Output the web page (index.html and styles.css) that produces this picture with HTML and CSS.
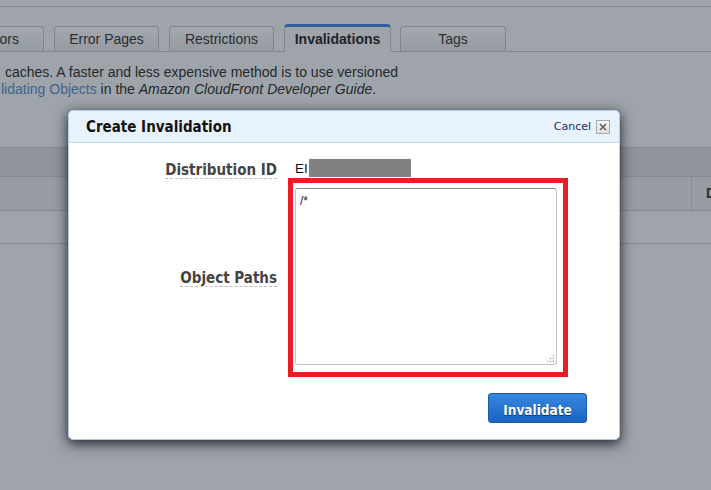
FILE: index.html
```html
<!DOCTYPE html>
<html>
<head>
<meta charset="utf-8">
<link rel="stylesheet" href="styles.css">
</head>
<body>
<div class="page">
  <div class="topbar"></div>
  <div class="tabs">
    <div class="tab tab-first">Behaviors</div>
    <div class="tab">Error Pages</div>
    <div class="tab">Restrictions</div>
    <div class="tab tab-active">Invalidations</div>
    <div class="tab tab-last">Tags</div>
  </div>
  <div class="intro">
    <div class="intro-line1">caches. A faster and less expensive method is to use versioned</div>
    <div class="intro-line2"><span class="link">lidating Objects</span> in the <em>Amazon CloudFront Developer Guide</em>.</div>
  </div>
  <div class="table">
    <div class="trow thead"></div>
    <div class="trow tbody1"><div class="tcell-spacer"></div><div class="tcell-last">D</div></div>
    <div class="trow tbody2"></div>
  </div>
</div>

<div class="modal">
  <div class="modal-header">
    <div class="modal-title">Create Invalidation</div>
    <div class="modal-cancel">Cancel <span class="close-box"><svg width="8" height="8" viewBox="0 0 8 8"><path d="M1 1 L7 7 M7 1 L1 7" stroke="#555" stroke-width="1.4" fill="none"/></svg></span></div>
  </div>
  <div class="modal-body">
    <div class="form-row row-id">
      <div class="label"><span class="label-text">Distribution ID</span></div>
      <div class="value">EI<span class="redact"></span></div>
    </div>
    <div class="form-row row-paths">
      <div class="label"><span class="label-text">Object Paths</span></div>
      <div class="value">
        <div class="highlight">
          <textarea class="paths">/*</textarea>
          <span class="grip"></span>
        </div>
      </div>
    </div>
    <div class="modal-footer">
      <button class="btn-primary">Invalidate</button>
    </div>
  </div>
</div>
</body>
</html>
```

FILE: styles.css
```css
html, body {
  margin: 0;
  padding: 0;
}
body {
  width: 711px;
  height: 490px;
  overflow: hidden;
  background: #9ea4aa;
  font-family: "Liberation Sans", Arial, sans-serif;
  color: #24282c;
  position: relative;
}
.page {
  width: 711px;
}
.topbar {
  height: 6px;
  border-bottom: 1px solid #878d93;
}
.tabs {
  display: flex;
  align-items: flex-end;
  gap: 10px;
  height: 27px;
  padding-top: 17px;
  border-bottom: 1px solid #80868c;
}
.tab {
  flex: 0 0 auto;
  box-sizing: border-box;
  width: 105px;
  height: 25px;
  border: 1px solid #80868c;
  border-bottom: none;
  border-radius: 4px 4px 0 0;
  background: linear-gradient(#a2a8ae, #959ba1);
  font-size: 14px;
  line-height: 24px;
  text-align: center;
  color: #2a2e33;
  white-space: nowrap;
  overflow: hidden;
}
.tab-first {
  margin-left: -61px;
  text-align: right;
  padding-right: 24px;
}
.tab-active {
  width: 107px;
  height: 28px;
  margin-bottom: -1px;
  border-top: 3px solid #2f5f96;
  background: #9ea4aa;
  font-weight: bold;
  line-height: 24px;
  color: #1f2327;
}
.tab-last {
  margin-left: -1px;
  width: 106px;
}
.intro {
  margin-top: 12px;
  font-size: 14px;
  line-height: 17px;
  white-space: nowrap;
}
.intro-line1 {
  padding-left: 5px;
}
.intro-line2 {
  padding-left: 1px;
}
.link {
  color: #3b6390;
}
.table {
  margin-top: 49px;
  border-top: 1px solid #878d93;
}
.trow {
  border-bottom: 1px solid #858b91;
}
.thead {
  height: 28px;
  background: #8f959b;
}
.tbody1 {
  height: 33px;
  background: #979da3;
  display: flex;
}
.tcell-spacer {
  flex: 0 0 auto;
  width: 691px;
  border-right: 1px solid #868c92;
}
.tcell-last {
  flex: 0 0 auto;
  padding-left: 14px;
  font-weight: bold;
  font-size: 14px;
  line-height: 33px;
  color: #2a2e33;
}
.tbody2 {
  height: 32px;
}

/* Modal */
.modal {
  position: absolute;
  left: 68px;
  top: 110px;
  width: 552px;
  height: 330px;
  box-sizing: border-box;
  background: #ffffff;
  border: 1px solid #b3cbe3;
  border-radius: 5px;
  box-shadow: 0 3px 8px rgba(20, 24, 30, 0.55), 0 4px 16px rgba(20, 24, 30, 0.55);
  overflow: hidden;
}
.modal-header {
  height: 31px;
  background: #e8f2fd;
  border-bottom: 1px solid #c6daef;
  display: flex;
  align-items: center;
  justify-content: space-between;
  padding: 0 9px 0 17px;
}
.modal-title {
  font-family: "DejaVu Sans Condensed", "DejaVu Sans", sans-serif;
  font-weight: bold;
  font-size: 15px;
  color: #111;
}
.modal-cancel {
  display: flex;
  align-items: center;
  gap: 5px;
  font-family: "DejaVu Sans", Verdana, sans-serif;
  font-size: 11px;
  color: #1e2b66;
}
.close-box {
  display: flex;
  align-items: center;
  justify-content: center;
  box-sizing: border-box;
  width: 14px;
  height: 14px;
  border: 1px solid #a9a9a9;
  background: linear-gradient(#f7f7f7, #e0e0e0);
}
.modal-body {
  padding-top: 15px;
}
.form-row {
  display: grid;
  grid-template-columns: 208px 1fr;
  column-gap: 18px;
}
.row-id {
  height: 20px;
  align-items: start;
}
.row-paths {
  align-items: center;
}
.label {
  text-align: right;
}
.label-text {
  display: inline-block;
  font-family: "DejaVu Sans Condensed", "DejaVu Sans", sans-serif;
  font-weight: bold;
  font-size: 15px;
  line-height: 16px;
  color: #444;
  border-bottom: 1px dashed #bdbdbd;
}
.row-id .label-text {
  margin-top: 4px;
}
.row-paths .label-text {
  margin-top: -4px;
}
.value {
  font-size: 13.5px;
  line-height: 22px;
  color: #111;
  white-space: nowrap;
}
.redact {
  display: inline-block;
  width: 102px;
  height: 18px;
  margin-left: 1px;
  vertical-align: -4px;
  background: #808080;
}
.highlight {
  position: relative;
  box-sizing: border-box;
  width: 280px;
  height: 199px;
  margin-left: -7px;
  border: 5px solid #ec1c24;
  padding: 5px 6px 7px 2px;
}
.paths {
  display: block;
  box-sizing: border-box;
  width: 100%;
  height: 100%;
  margin: 0;
  border: 1px solid #c4c4c4;
  border-top-color: #8a8a8a;
  border-radius: 3px;
  padding: 5px 4px;
  font-family: "Liberation Sans", Arial, sans-serif;
  font-size: 12px;
  color: #222;
  resize: none;
  outline: none;
}
.grip {
  position: absolute;
  right: 9px;
  bottom: 10px;
  width: 8px;
  height: 8px;
  background-image: radial-gradient(circle, #b5b5b5 0.9px, transparent 1.1px);
  background-size: 3px 3px;
  clip-path: polygon(100% 0, 100% 100%, 0 100%);
}
.modal-footer {
  display: flex;
  justify-content: flex-end;
  padding: 16px 32px 0 0;
}
.btn-primary {
  box-sizing: border-box;
  width: 99px;
  height: 30px;
  border: 1px solid #1c5aa6;
  border-radius: 3px;
  background: linear-gradient(#3588e0, #1a64c2);
  color: #fff;
  font-family: "DejaVu Sans Condensed", "DejaVu Sans", sans-serif;
  font-weight: bold;
  font-size: 13.5px;
  text-shadow: 0 1px 1px rgba(0, 0, 0, 0.6);
  padding: 3px 0 0 0;
  cursor: pointer;
}
```
